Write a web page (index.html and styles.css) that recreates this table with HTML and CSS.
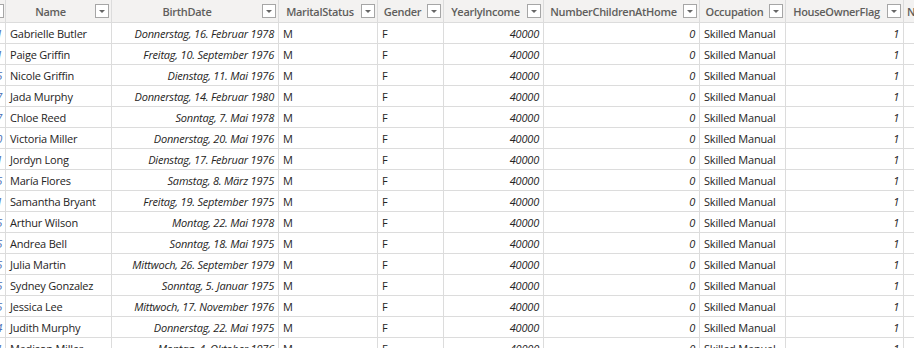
FILE: index.html
```html
<!DOCTYPE html>
<html>
<head>
<meta charset="utf-8">
<link rel="stylesheet" href="styles.css">
</head>
<body>
<div class="grid">
  <div class="hcell c0"><span class="htext"></span><span class="filter"><svg width="14" height="14" viewBox="0 0 14 14"><rect x="0.5" y="0.5" width="13" height="13" fill="#fff" stroke="#a6a6a6"/><path d="M4 6h6l-3 3z" fill="#666"/></svg></span></div>
  <div class="hcell"><span class="htext">Name</span><span class="filter"><svg width="14" height="14" viewBox="0 0 14 14"><rect x="0.5" y="0.5" width="13" height="13" fill="#fff" stroke="#a6a6a6"/><path d="M4 6h6l-3 3z" fill="#666"/></svg></span></div>
  <div class="hcell"><span class="htext">BirthDate</span><span class="filter"><svg width="14" height="14" viewBox="0 0 14 14"><rect x="0.5" y="0.5" width="13" height="13" fill="#fff" stroke="#a6a6a6"/><path d="M4 6h6l-3 3z" fill="#666"/></svg></span></div>
  <div class="hcell"><span class="htext">MaritalStatus</span><span class="filter"><svg width="14" height="14" viewBox="0 0 14 14"><rect x="0.5" y="0.5" width="13" height="13" fill="#fff" stroke="#a6a6a6"/><path d="M4 6h6l-3 3z" fill="#666"/></svg></span></div>
  <div class="hcell"><span class="htext">Gender</span><span class="filter"><svg width="14" height="14" viewBox="0 0 14 14"><rect x="0.5" y="0.5" width="13" height="13" fill="#fff" stroke="#a6a6a6"/><path d="M4 6h6l-3 3z" fill="#666"/></svg></span></div>
  <div class="hcell"><span class="htext">YearlyIncome</span><span class="filter"><svg width="14" height="14" viewBox="0 0 14 14"><rect x="0.5" y="0.5" width="13" height="13" fill="#fff" stroke="#a6a6a6"/><path d="M4 6h6l-3 3z" fill="#666"/></svg></span></div>
  <div class="hcell"><span class="htext">NumberChildrenAtHome</span><span class="filter"><svg width="14" height="14" viewBox="0 0 14 14"><rect x="0.5" y="0.5" width="13" height="13" fill="#fff" stroke="#a6a6a6"/><path d="M4 6h6l-3 3z" fill="#666"/></svg></span></div>
  <div class="hcell"><span class="htext">Occupation</span><span class="filter"><svg width="14" height="14" viewBox="0 0 14 14"><rect x="0.5" y="0.5" width="13" height="13" fill="#fff" stroke="#a6a6a6"/><path d="M4 6h6l-3 3z" fill="#666"/></svg></span></div>
  <div class="hcell"><span class="htext">HouseOwnerFlag</span><span class="filter"><svg width="14" height="14" viewBox="0 0 14 14"><rect x="0.5" y="0.5" width="13" height="13" fill="#fff" stroke="#a6a6a6"/><path d="M4 6h6l-3 3z" fill="#666"/></svg></span></div>
  <div class="hcell last"><span class="htext left">NumberCarsOwned</span></div>
</div>
<div class="grid body" id="rows"></div>
<script src="app.js"></script>
</body>
</html>
```
FILE: styles.css
```css
html, body {
  margin: 0;
  padding: 0;
  background: #ffffff;
  overflow: hidden;
  width: 914px;
  height: 348px;
}
.grid {
  display: grid;
  grid-template-columns: 26px 106px 167px 99px 66px 100px 156px 86px 118px 140px;
  font-family: "Open Sans", "Segoe UI", sans-serif;
  font-size: 11px;
  letter-spacing: -0.2px;
  width: 1064px;
  margin-left: -20px;
}
.hcell {
  height: 23px;
  box-sizing: border-box;
  background: #f3f2f1;
  border-right: 1px solid #dcdcdc;
  border-bottom: 1px solid #dcdcdc;
  display: flex;
  align-items: center;
  padding-right: 2px;
  overflow: hidden;
  color: #605e5c;
  font-weight: 600;
  letter-spacing: -0.3px;
}
.hcell.c0 {
  padding-right: 1px;
  justify-content: flex-end;
}
.hcell.c0 .htext { display: none; }
.htext {
  flex: 1;
  text-align: center;
  white-space: nowrap;
  overflow: hidden;
}
.htext.left { text-align: left; padding-left: 3px; }
.filter {
  width: 14px;
  height: 14px;
  flex: none;
  display: block;
}
.filter svg { display: block; }
.cell {
  height: 21px;
  box-sizing: border-box;
  border-right: 1px solid #dcdcdc;
  border-bottom: 1px solid #dcdcdc;
  padding: 0 4px;
  display: flex;
  align-items: center;
  white-space: nowrap;
  overflow: hidden;
  color: #252423;
}
.cell.r { justify-content: flex-end; font-style: italic; padding-right: 4px; }
.cell.c0 { padding-right: 3px; justify-content: flex-end; color: #4a6fb5; font-style: italic; }
```
FILE: app.js
```js
const rows = [
  ["Gabrielle Butler", "Donnerstag, 16. Februar 1978", "1"],
  ["Paige Griffin", "Freitag, 10. September 1976", "1"],
  ["Nicole Griffin", "Dienstag, 11. Mai 1976", "5"],
  ["Jada Murphy", "Donnerstag, 14. Februar 1980", "7"],
  ["Chloe Reed", "Sonntag, 7. Mai 1978", "7"],
  ["Victoria Miller", "Donnerstag, 20. Mai 1976", "0"],
  ["Jordyn Long", "Dienstag, 17. Februar 1976", "1"],
  ["María Flores", "Samstag, 8. März 1975", "5"],
  ["Samantha Bryant", "Freitag, 19. September 1975", "1"],
  ["Arthur Wilson", "Montag, 22. Mai 1978", "5"],
  ["Andrea Bell", "Sonntag, 18. Mai 1975", "5"],
  ["Julia Martin", "Mittwoch, 26. September 1979", "5"],
  ["Sydney Gonzalez", "Sonntag, 5. Januar 1975", "5"],
  ["Jessica Lee", "Mittwoch, 17. November 1976", "5"],
  ["Judith Murphy", "Donnerstag, 22. Mai 1975", "4"],
  ["Madison Miller", "Montag, 4. Oktober 1976", "1"]
];
const host = document.getElementById("rows");
const cell = (text, cls) => {
  const d = document.createElement("div");
  d.className = "cell" + (cls ? " " + cls : "");
  d.textContent = text;
  host.appendChild(d);
};
for (const [name, date, k] of rows) {
  cell("1102" + k, "c0");
  cell(name);
  cell(date, "r");
  cell("M");
  cell("F");
  cell("40000", "r");
  cell("0", "r");
  cell("Skilled Manual");
  cell("1", "r");
  cell("", "r");
}
```
